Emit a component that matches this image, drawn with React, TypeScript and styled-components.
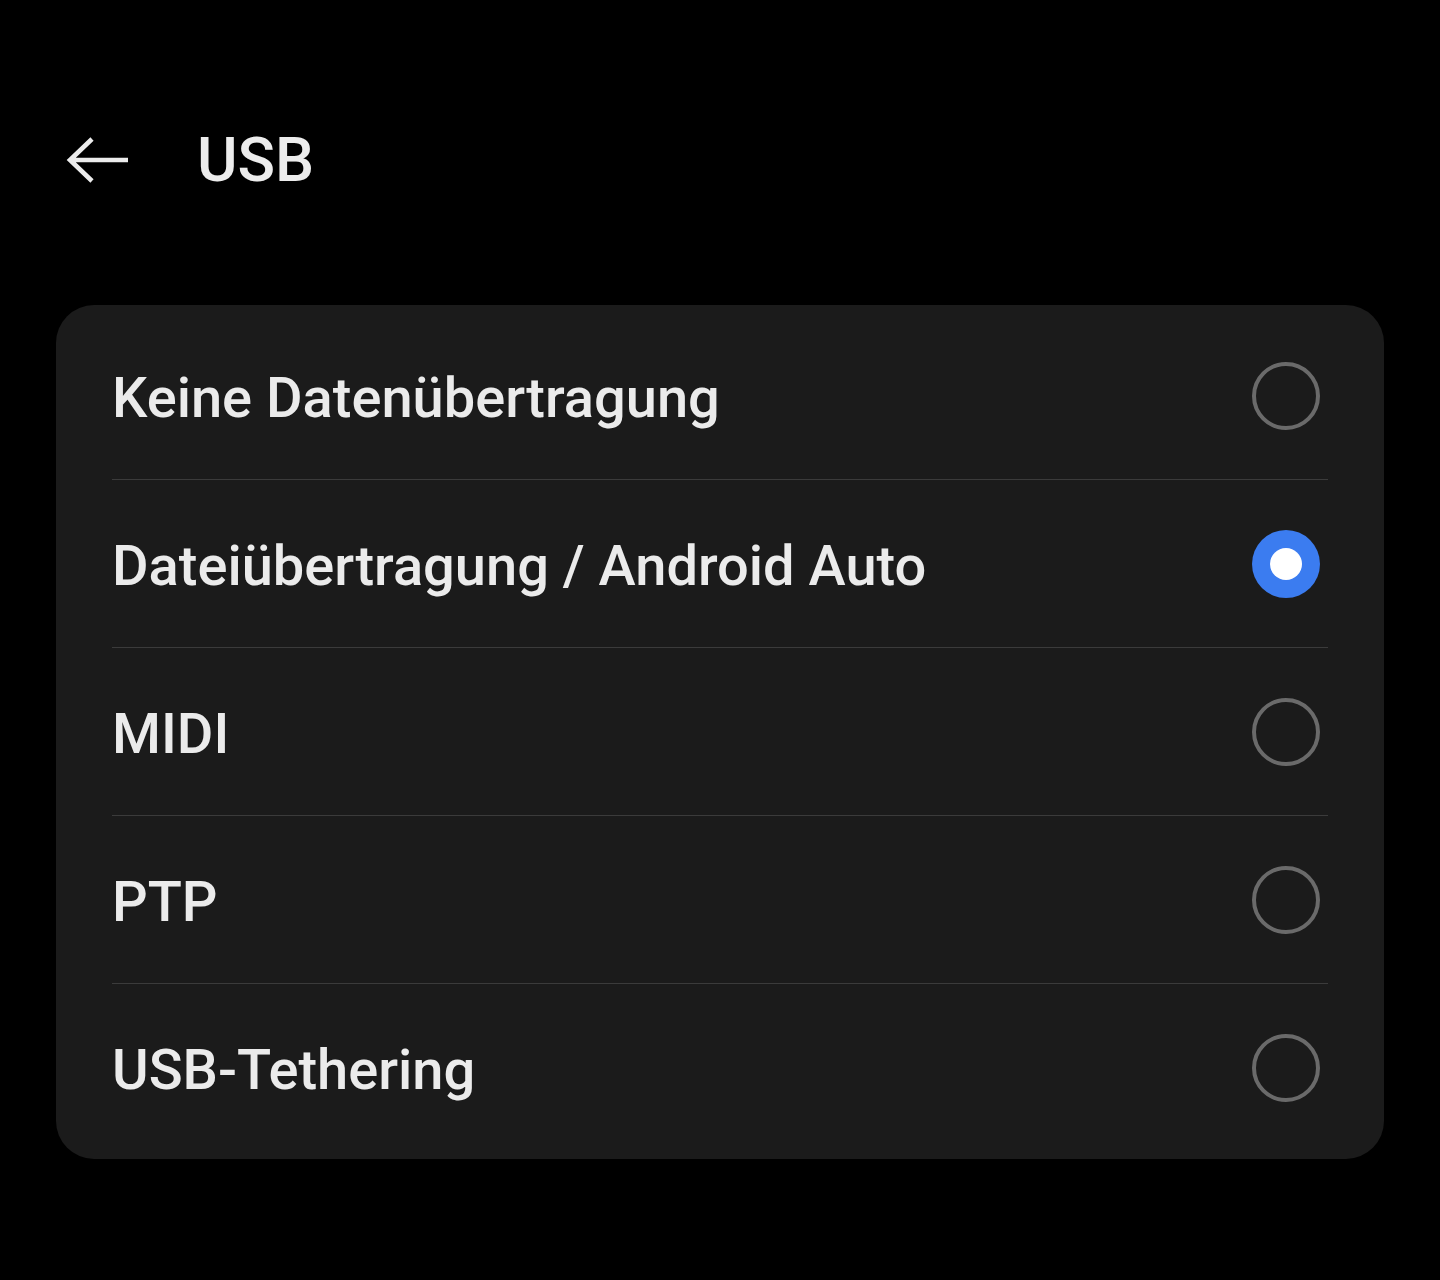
import React from "react";
import styled, { createGlobalStyle } from "styled-components";

const Global = createGlobalStyle`
  html, body { margin: 0; padding: 0; background: #000; }
  body { font-family: Roboto, "Noto Sans", sans-serif; }
`;

const Page = styled.div`
  width: 1440px;
  height: 1280px;
  background: #000;
  box-sizing: border-box;
  padding: 0 56px;
  display: flex;
  flex-direction: column;
`;

const Header = styled.header`
  height: 305px;
  display: flex;
  align-items: flex-start;
  padding-top: 126px;
  box-sizing: border-box;
`;

const BackButton = styled.button`
  width: 141px;
  height: 68px;
  background: none;
  border: none;
  padding: 0 0 0 9px;
  display: flex;
  align-items: center;
  cursor: pointer;
`;

const Title = styled.h1`
  margin: 0;
  font-family: Roboto, sans-serif;
  font-weight: 500;
  font-size: 62px;
  line-height: 68px;
  color: #ececec;
`;

const Card = styled.section`
  background: #1b1b1b;
  border-radius: 38px;
  padding: 7px 56px;
  display: flex;
  flex-direction: column;
`;

const Row = styled.div<{ $last?: boolean }>`
  height: 168px;
  box-sizing: border-box;
  display: flex;
  align-items: center;
  justify-content: space-between;
  border-bottom: ${(p) => (p.$last ? "none" : "1px solid #3b3b3b")};
`;

const Label = styled.span`
  font-family: Roboto, sans-serif;
  font-weight: 500;
  font-size: 56px;
  color: #ebebeb;
  margin-top: 4px;
`;

const Radio = styled.span<{ $checked?: boolean }>`
  width: 68px;
  height: 68px;
  box-sizing: border-box;
  border-radius: 50%;
  margin-right: 8px;
  display: flex;
  align-items: center;
  justify-content: center;
  border: ${(p) => (p.$checked ? "none" : "4px solid #6a6a6a")};
  background: ${(p) => (p.$checked ? "#3b7cf0" : "transparent")};
  &::after {
    content: "";
    display: ${(p) => (p.$checked ? "block" : "none")};
    width: 32px;
    height: 32px;
    border-radius: 50%;
    background: #fff;
  }
`;

const options = [
  "Keine Datenübertragung",
  "Dateiübertragung / Android Auto",
  "MIDI",
  "PTP",
  "USB-Tethering",
];

export default function App() {
  return (
    <>
      <Global />
      <Page>
        <Header>
          <BackButton aria-label="Zurück">
            <svg width="66" height="50" viewBox="0 0 66 50">
              <path
                d="M63 25 H6 M27 4 L5 25 L27 46"
                fill="none"
                stroke="#ececec"
                strokeWidth="4.6"
                strokeLinecap="butt"
                strokeLinejoin="miter"
              />
            </svg>
          </BackButton>
          <Title>USB</Title>
        </Header>
        <Card>
          {options.map((o, i) => (
            <Row key={o} $last={i === options.length - 1}>
              <Label>{o}</Label>
              <Radio $checked={i === 1} />
            </Row>
          ))}
        </Card>
      </Page>
    </>
  );
}
